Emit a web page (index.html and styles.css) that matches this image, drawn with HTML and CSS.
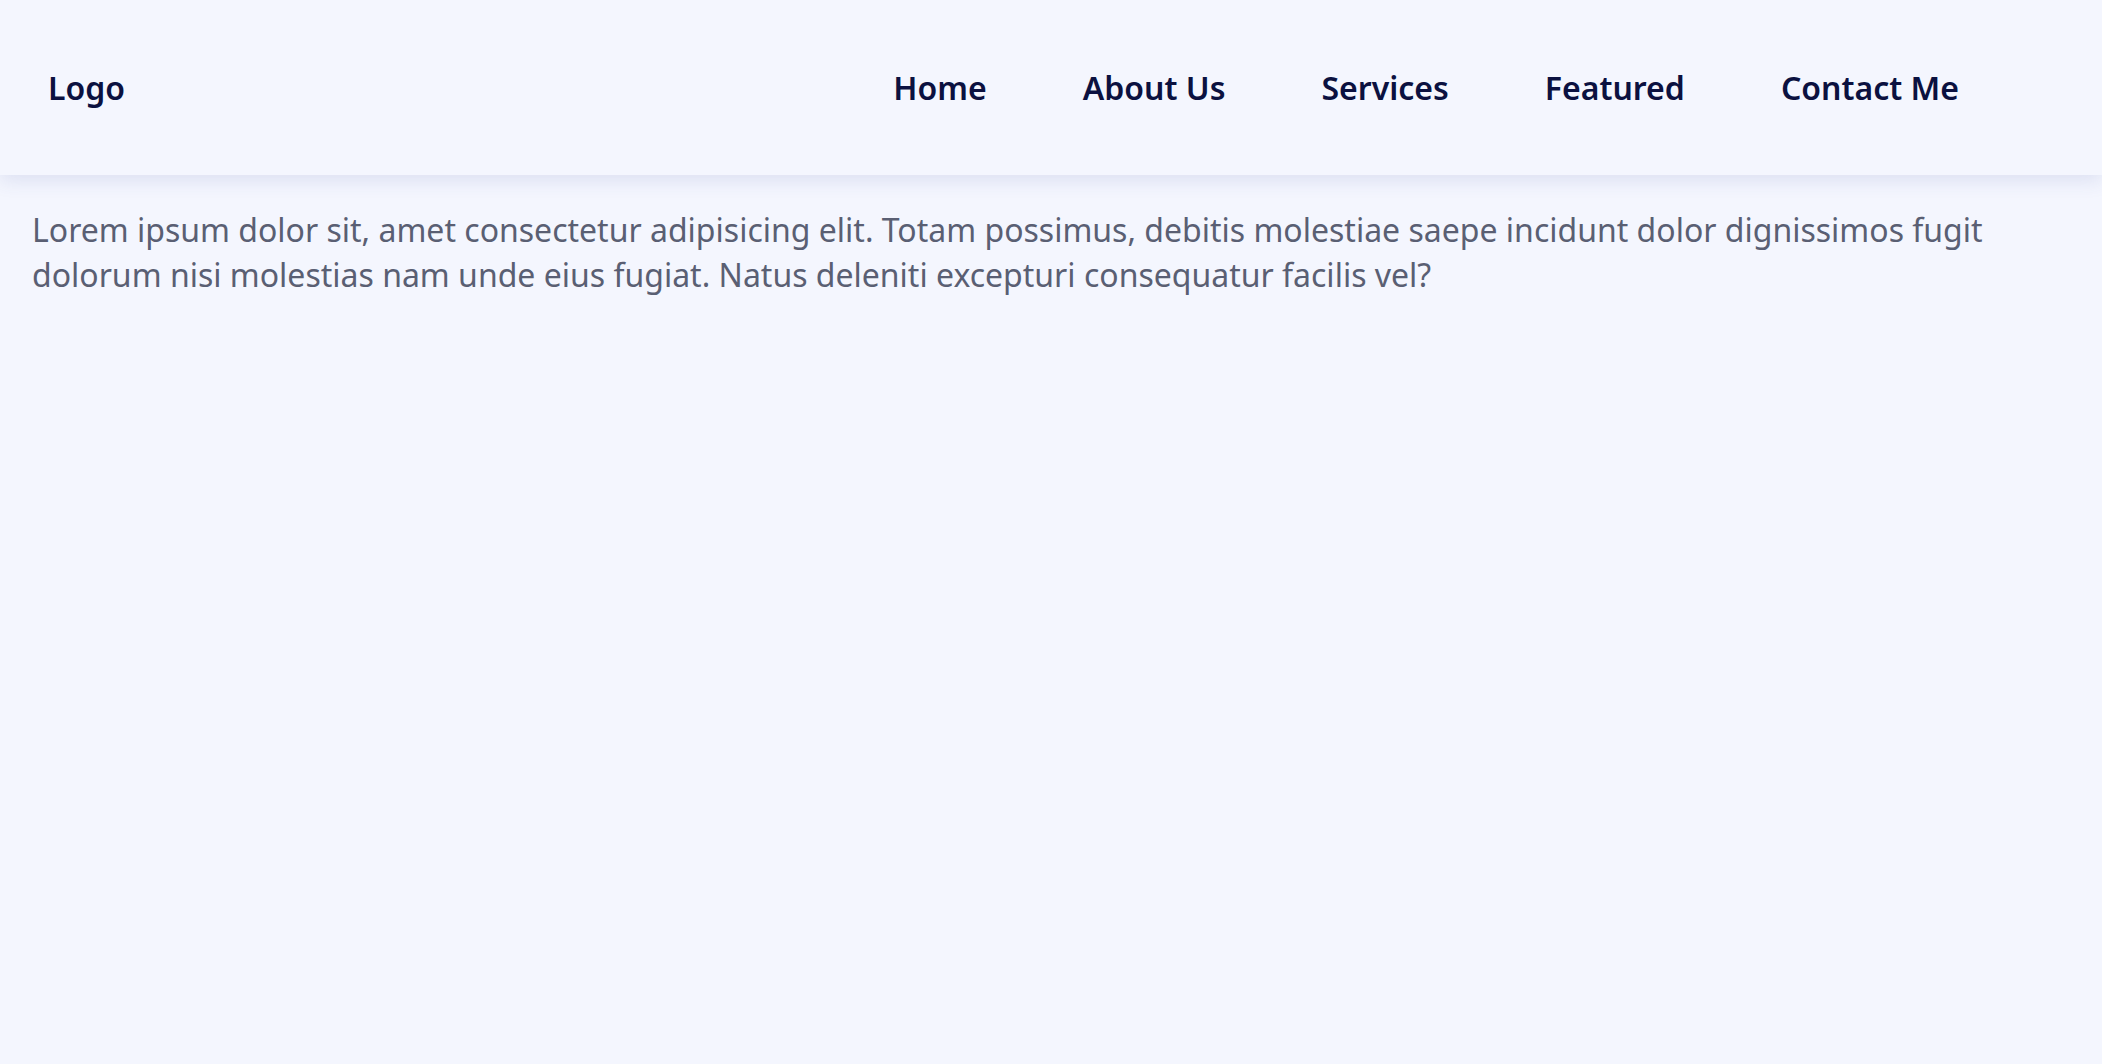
FILE: index.html
```html
<!DOCTYPE html>
<html lang="en">
<head>
<meta charset="utf-8">
<title>Page</title>
<link rel="stylesheet" href="styles.css">
</head>
<body>
<header class="site-header">
  <div class="logo">Logo</div>
  <nav class="nav">
    <a href="#" class="nav-link">Home</a>
    <a href="#" class="nav-link">About Us</a>
    <a href="#" class="nav-link">Services</a>
    <a href="#" class="nav-link">Featured</a>
    <a href="#" class="nav-link">Contact Me</a>
  </nav>
</header>
<main class="content">
  <p class="intro">Lorem ipsum dolor sit, amet consectetur adipisicing elit. Totam possimus, debitis molestiae saepe incidunt dolor dignissimos fugit dolorum nisi molestias nam unde eius fugiat. Natus deleniti excepturi consequatur facilis vel?</p>
</main>
</body>
</html>
```

FILE: styles.css
```css
html, body {
  margin: 0;
  padding: 0;
  background: #f4f6fe;
  font-family: "Noto Sans", "Open Sans", sans-serif;
}

.site-header {
  height: 175px;
  display: flex;
  align-items: center;
  justify-content: space-between;
  padding: 0 143px 0 48px;
  background: #f4f6fe;
  box-shadow: 0 6px 18px rgba(60, 70, 160, 0.12);
  position: relative;
  z-index: 1;
}

.logo {
  font-size: 32px;
  font-weight: 600;
  color: #0b1140;
}

.nav {
  display: flex;
  gap: 96px;
}

.nav-link {
  font-size: 32px;
  font-weight: 600;
  color: #0b1140;
  text-decoration: none;
}

.content {
  padding: 32px;
}

.intro {
  margin: 0;
  font-size: 32px;
  line-height: 45px;
  color: #5a5f73;
}
```
